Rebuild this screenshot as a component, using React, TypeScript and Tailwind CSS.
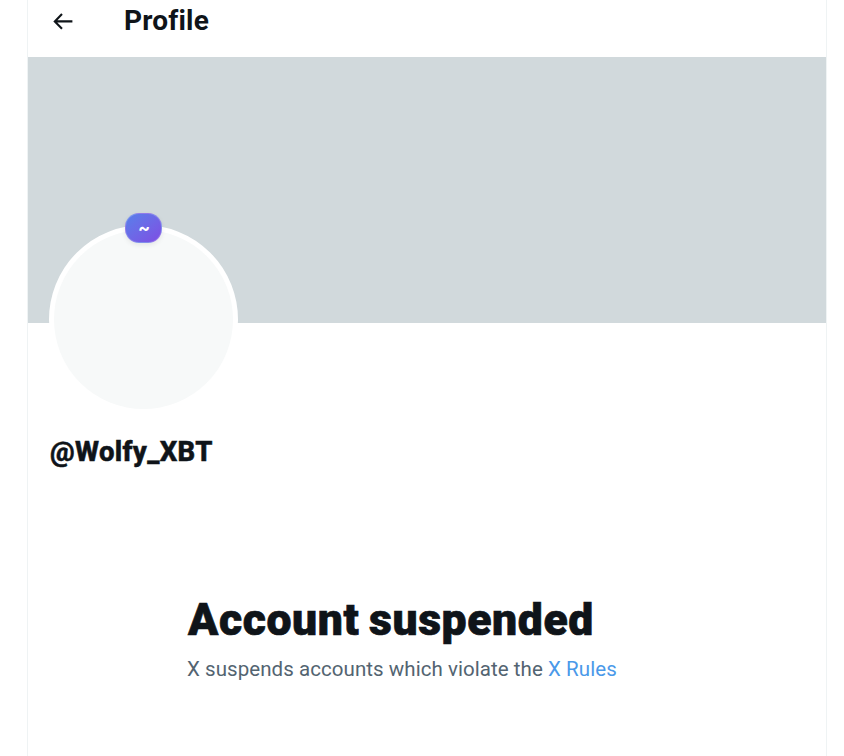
import React from "react";

function BackArrow() {
  return (
    <svg viewBox="0 0 20 18" className="h-[18px] w-5" fill="none" stroke="#0f1419" strokeWidth="2.1">
      <path d="M9 2 1.8 9.4 9 16.8M1.8 9.4H19.4" />
    </svg>
  );
}

function Header() {
  return (
    <header className="flex h-[57px] items-start">
      <button aria-label="Back" className="ml-[25px] mt-3 block">
        <BackArrow />
      </button>
      <h1 className="ml-[51px] mt-1 whitespace-nowrap font-['Roboto',sans-serif] text-[28px] font-bold leading-[34px] tracking-[0.2px]">
        Profile
      </h1>
    </header>
  );
}

function Avatar() {
  return (
    <div className="relative -mt-[98px] ml-[21px] h-[189px] w-[189px] rounded-full border-[5.5px] border-white bg-[#f7f9f9]">
      <span className="absolute left-[71px] top-[-17px] flex h-[30px] w-[37px] items-center justify-center rounded-[14px] border border-white/20 bg-linear-to-br from-[#557fea] to-[#7d4ce3] pl-px font-['Inter',sans-serif] text-[18px] font-bold leading-none text-white shadow-[0_2px_5px_rgba(0,0,0,0.08)]">
        ~
      </span>
    </div>
  );
}

export default function App() {
  return (
    <div className="h-[756px] overflow-hidden bg-white text-[#0f1419]">
      <main className="ml-[27px] h-full w-[800px] border-x border-[#eff3f4]">
        <Header />
        <div className="h-[266px] bg-[#d1d9dc]" />
        <Avatar />
        <h2 className="ml-[22px] mt-[21px] w-fit whitespace-nowrap font-['Roboto',sans-serif] text-[27.5px] font-extrabold leading-[34px] tracking-[0.35px] [-webkit-text-stroke:0.5px_#0f1419]">
          @Wolfy_XBT
        </h2>
        <section className="ml-[160px] mt-[126px]">
          <h3 className="w-fit whitespace-nowrap font-['Roboto',sans-serif] text-[44.5px] font-black leading-[50px] tracking-[0.6px] [word-spacing:-2px] [-webkit-text-stroke:0.7px_#0f1419]">
            Account suspended
          </h3>
          <p className="-ml-px mt-[10px] w-fit whitespace-nowrap font-['Roboto',sans-serif] text-[20.5px] leading-7 tracking-[0.06px] text-[#536471]">
            X suspends accounts which violate the <a className="text-[#4a99e9]">X Rules</a>
          </p>
        </section>
      </main>
    </div>
  );
}
